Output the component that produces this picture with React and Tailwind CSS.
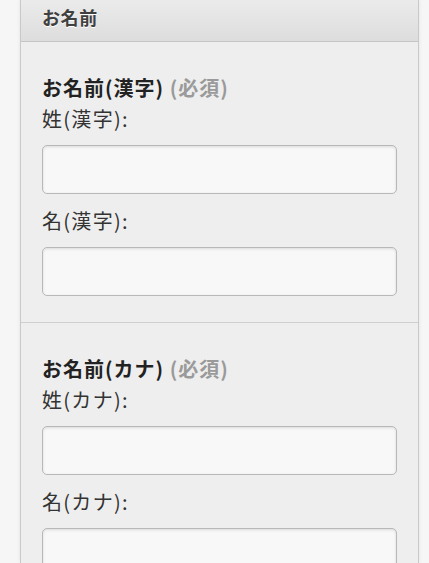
export default function App() {
  const font = { fontFamily: '"Noto Sans CJK JP", "Noto Sans", sans-serif' };
  const Input = () => (
    <div className="h-[49px] w-full rounded-[5px] border border-[#b8b8b8] bg-[#f8f8f8] shadow-[inset_0_1px_3px_rgba(0,0,0,0.12)]" />
  );
  const Section = ({ title, a, b, last }) => (
    <div className={`px-[21px] pt-[31px] ${last ? "" : "pb-[26px] border-b border-[#cfcfcf]"}`}>
      <div className="text-[20px] leading-[30px] tracking-[1px] font-bold text-[#222]">
        {title} <span className="text-[#9a9a9a]">(必須)</span>
      </div>
      <div className="mt-[3px] text-[20px] leading-[26px] tracking-[1.3px] text-[#333]">{a}</div>
      <div className="mt-[13px]"><Input /></div>
      <div className="mt-[14px] text-[20px] leading-[26px] tracking-[1.3px] text-[#333]">{b}</div>
      <div className="mt-[13px]"><Input /></div>
    </div>
  );
  return (
    <div className="min-h-[563px] w-[429px] overflow-hidden bg-[#f6f6f6]" style={font}>
      <div className="ml-[20px] w-[399px] h-[563px] overflow-hidden border-x border-[#c9c9c9] bg-[#eeeeee] shadow-[0_0_4px_rgba(0,0,0,0.08)]">
        <div className="h-[42px] border-b border-[#c6c6c6] bg-gradient-to-b from-[#ebebeb] to-[#dddddd] px-[21px]">
          <div className="pt-[5px] text-[18px] leading-[24px] tracking-[0.6px] font-bold text-[#404040] [text-shadow:0_1px_0_#fff]">お名前</div>
        </div>
        <Section title="お名前(漢字)" a="姓(漢字):" b="名(漢字):" />
        <Section title="お名前(カナ)" a="姓(カナ):" b="名(カナ):" last />
      </div>
    </div>
  );
}
